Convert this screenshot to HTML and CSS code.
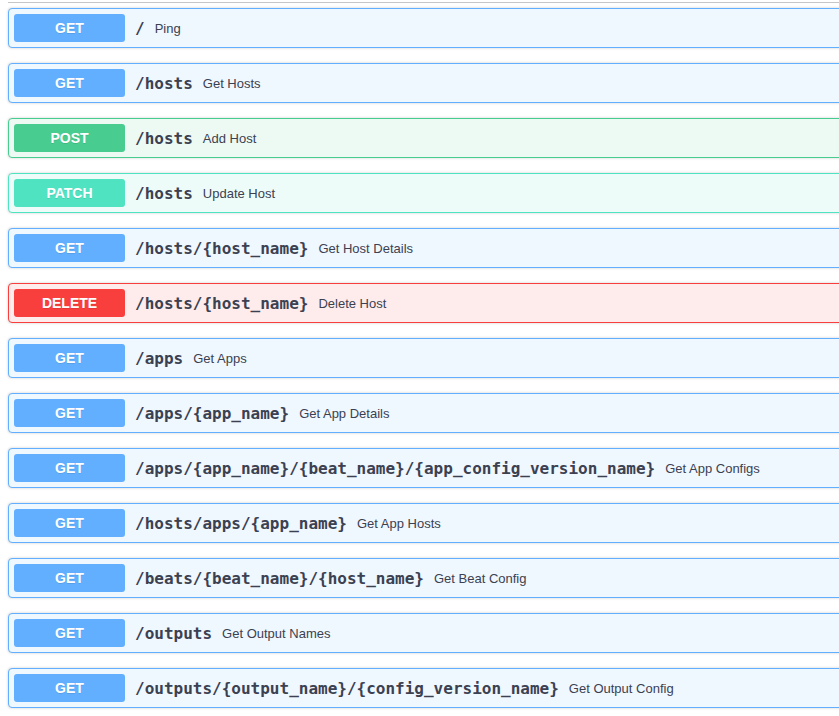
FILE: index.html
```html
<!DOCTYPE html>
<html>
<head>
<meta charset="utf-8">
<link rel="stylesheet" href="styles.css">
</head>
<body>
<div class="wrap">
  <div class="divider"></div>
  <div class="opblock get"><span class="method">GET</span><span class="path">/</span><span class="desc">Ping</span></div>
  <div class="opblock get"><span class="method">GET</span><span class="path">/hosts</span><span class="desc">Get Hosts</span></div>
  <div class="opblock post"><span class="method">POST</span><span class="path">/hosts</span><span class="desc">Add Host</span></div>
  <div class="opblock patch"><span class="method">PATCH</span><span class="path">/hosts</span><span class="desc">Update Host</span></div>
  <div class="opblock get"><span class="method">GET</span><span class="path">/hosts/{host_name}</span><span class="desc">Get Host Details</span></div>
  <div class="opblock delete"><span class="method">DELETE</span><span class="path">/hosts/{host_name}</span><span class="desc">Delete Host</span></div>
  <div class="opblock get"><span class="method">GET</span><span class="path">/apps</span><span class="desc">Get Apps</span></div>
  <div class="opblock get"><span class="method">GET</span><span class="path">/apps/{app_name}</span><span class="desc">Get App Details</span></div>
  <div class="opblock get"><span class="method">GET</span><span class="path">/apps/{app_name}/{beat_name}/{app_config_version_name}</span><span class="desc">Get App Configs</span></div>
  <div class="opblock get"><span class="method">GET</span><span class="path">/hosts/apps/{app_name}</span><span class="desc">Get App Hosts</span></div>
  <div class="opblock get"><span class="method">GET</span><span class="path">/beats/{beat_name}/{host_name}</span><span class="desc">Get Beat Config</span></div>
  <div class="opblock get"><span class="method">GET</span><span class="path">/outputs</span><span class="desc">Get Output Names</span></div>
  <div class="opblock get"><span class="method">GET</span><span class="path">/outputs/{output_name}/{config_version_name}</span><span class="desc">Get Output Config</span></div>
</div>
</body>
</html>
```
FILE: styles.css
```css
html, body {
  margin: 0;
  padding: 0;
  background: #fff;
  overflow: hidden;
}
.wrap {
  width: 880px;
  padding: 2px 0 0 8px;
}
.divider {
  height: 1px;
  background: rgba(59, 65, 81, 0.3);
  margin-bottom: 5px;
}
.opblock {
  display: flex;
  align-items: center;
  padding: 5px;
  border: 1px solid;
  border-radius: 4px;
  margin-bottom: 15px;
  box-shadow: 0 0 3px rgba(0, 0, 0, 0.19);
}
.method {
  flex: none;
  width: 111px;
  height: 28px;
  line-height: 28px;
  text-align: center;
  border-radius: 3px;
  color: #fff;
  font-family: "Liberation Sans", Arial, sans-serif;
  font-size: 14px;
  font-weight: 700;
  text-shadow: 0 1px 0 rgba(0, 0, 0, 0.1);
}
.path {
  padding: 0 10px;
  font-family: "DejaVu Sans Mono", monospace;
  font-size: 16px;
  font-weight: 700;
  color: #3b4151;
  white-space: nowrap;
}
.desc {
  font-family: "Liberation Sans", Arial, sans-serif;
  font-size: 13px;
  color: #3b4151;
  white-space: nowrap;
}
.get { background: #eff7ff; border-color: #61affe; }
.get .method { background: #61affe; }
.post { background: #edfaf4; border-color: #49cc90; }
.post .method { background: #49cc90; }
.patch { background: #eefcf9; border-color: #50e3c2; }
.patch .method { background: #50e3c2; }
.delete { background: #feecec; border-color: #f93e3e; }
.delete .method { background: #f93e3e; }
```
